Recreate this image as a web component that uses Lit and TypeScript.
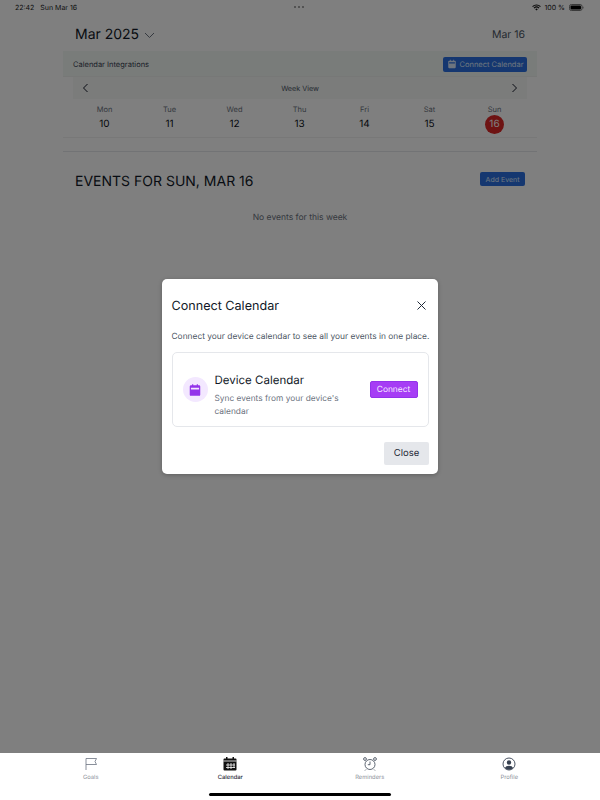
import { LitElement, html, css } from "lit";
import { customElement } from "lit/decorators.js";

const days = [
  ["Mon", "10"], ["Tue", "11"], ["Wed", "12"], ["Thu", "13"], ["Fri", "14"], ["Sat", "15"], ["Sun", "16"],
];

const calIcon = (cls: string) => html`<svg class=${cls} viewBox="0 0 24 24" fill="currentColor"><path d="M7 2h2v2h6V2h2v2h2a2 2 0 0 1 2 2v14a2 2 0 0 1-2 2H5a2 2 0 0 1-2-2V6a2 2 0 0 1 2-2h2V2zM5 8v3h14V8H5z"/></svg>`;

@customElement("app-root")
export class AppRoot extends LitElement {
  static styles = css`
    :host { display: flex; flex-direction: column; position: relative; width: 600px; height: 800px; overflow: hidden; font-family: Inter, "Noto Sans", sans-serif; background: #fff; color: #111827; text-rendering: geometricPrecision; }
    .main { flex: 1; display: flex; flex-direction: column; position: relative; min-height: 0; }
    .status { height: 14px; display: flex; align-items: center; justify-content: space-between; padding: 0 16px 0 15px; font-size: 7px; color: #222; position: relative; }
    .status .left { display: flex; gap: 6px; }
    .dots { position: absolute; left: 294px; top: 5.5px; display: flex; gap: 2px; }
    .dots i { width: 2px; height: 2px; border-radius: 50%; background: #888; }
    .status .right { display: flex; align-items: center; gap: 3px; }
    .wifi { width: 9px; height: 7px; }
    .battery { width: 15px; height: 7px; margin-left: 1px; }
    .content { padding: 0 63px; display: flex; flex-direction: column; }
    .head { display: flex; align-items: center; justify-content: space-between; padding: 4px 12px 0; height: 37px; box-sizing: border-box; }
    .month { display: flex; align-items: center; gap: 5px; font-size: 14px; color: #111827; }
    .chev { width: 11px; height: 7px; margin-top: 1px; }
    .today { font-size: 10.5px; color: #4b5563; }
    .integr { height: 26px; background: #f3f8f5; border-bottom: 1px solid #eef0ee; display: flex; align-items: center; justify-content: space-between; padding: 1px 10px 0 10px; font-size: 7.5px; color: #374151; box-sizing: border-box; }
    .btn { display: flex; align-items: center; justify-content: center; background: #3b82f6; color: #fff; border-radius: 2px; }
    .btn.conn { width: 84px; height: 15px; gap: 3px; font-size: 7.5px; color: #dbeafe; background: #2b6fe0; }
    .ico-sm { width: 10px; height: 10px; }
    .week { margin: 0 10px; height: 22px; background: #f6f8f7; display: flex; align-items: center; justify-content: space-between; padding: 0 9px; font-size: 7.2px; color: #4b5563; }
    .arrow { width: 7px; height: 10px; }
    .days { display: grid; grid-template-columns: repeat(7, 65px); padding: 5px 0 0 9px; height: 39px; box-sizing: border-box; border-bottom: 1px solid #f0f0f0; }
    .day { display: flex; flex-direction: column; align-items: center; }
    .dname { font-size: 7.5px; color: #6b7280; height: 11px; line-height: 11px; }
    .dnum { font-size: 10px; height: 19px; width: 19px; line-height: 19px; text-align: center; border-radius: 50%; color: #0b0f18; }
    .dnum.sel { background: #dc2626; color: #fff; }
    .rule { margin-top: 13px; height: 1px; background: #e5e7eb; }
    .ev-head { display: flex; justify-content: space-between; padding: 14px 12px 0; height: 60px; box-sizing: border-box; }
    .ev-title { font-size: 14px; line-height: 30px; height: 30px; color: #111827; margin-top: 1px; }
    .btn.add { width: 45px; height: 14px; font-size: 7px; margin-top: 6px; color: #dbeafe; background: #2b6fe0; }
    .empty { text-align: center; font-size: 8.5px; color: #6b7280; line-height: 12px; }
    .overlay { position: absolute; inset: 0; background: rgba(0,0,0,.5); }
    .dialog { position: absolute; left: 162px; top: 279px; width: 276px; height: 195px; box-sizing: border-box; background: #fff; border-radius: 5px; padding: 0 9px 0 9.5px; display: flex; flex-direction: column; box-shadow: 0 1px 4px rgba(0,0,0,.25); }
    .d-head { display: flex; align-items: center; justify-content: space-between; height: 45px; padding-top: 9px; box-sizing: border-box; }
    .d-title { font-size: 12.6px; color: #111827; }
    .x { width: 11px; height: 11px; margin-right: 2px; margin-top: -2px; }
    .d-text { font-size: 8.4px; color: #4b5563; margin-top: 7px; line-height: 12px; white-space: nowrap; }
    .card { margin-top: 9px; height: 75px; box-sizing: border-box; border: 1px solid #e5e7eb; border-radius: 5px; display: flex; align-items: center; padding: 0 10px; }
    .c-icon { width: 25px; height: 25px; border-radius: 50%; background: #f3e8ff; display: flex; align-items: center; justify-content: center; color: #9333ea; flex: none; }
    .c-icon svg { width: 14px; height: 14px; }
    .c-body { margin-left: 7px; width: 149px; flex: none; padding-top: 12px; }
    .c-title { font-size: 11.5px; color: #111827; line-height: 16px; }
    .c-sub { font-size: 8.35px; line-height: 13px; color: #6b7280; margin-top: 5px; }
    .btn.connect { margin-left: 6px; width: 48px; height: 17px; background: #a63df5; font-size: 8.4px; border: 1px solid #9333ea; box-sizing: border-box; color: #f5eaff; }
    .d-foot { display: flex; justify-content: flex-end; margin-top: 15px; }
    .close { width: 45px; height: 23px; background: #e5e7eb; border-radius: 2px; display: flex; align-items: center; justify-content: center; font-size: 9.5px; color: #1f2937; }
    .tabs { height: 47px; flex: none; display: grid; grid-template-columns: repeat(4, 139.5px); padding-left: 21px; background: #fff; position: relative; }
    .tab { display: flex; flex-direction: column; align-items: center; padding-top: 4px; font-size: 5.8px; color: #8a8f98; }
    .tab svg { width: 14px; height: 14px; margin-bottom: 3px; }
    .tab.on { color: #1f2937; font-weight: 500; }
    .home { position: absolute; left: 209px; top: 40px; width: 182px; height: 3px; border-radius: 2px; background: #000; }
  `;

  render() {
    return html`
      <div class="main">
        <div class="status">
          <div class="left"><span>22:42</span><span>Sun Mar 16</span></div>
          <div class="dots"><i></i><i></i><i></i></div>
          <div class="right">
            <svg class="wifi" viewBox="0 0 16 12" fill="none" stroke="#111" stroke-width="2"><path d="M1 4.500a10 10 0 0 1 14 0M3.500 7a6.500 6.500 0 0 1 9 0"/><path d="M8 11.500 5.800 9a3 3 0 0 1 4.400 0z" fill="#111" stroke="none"/></svg>
            <span>100 %</span>
            <svg class="battery" viewBox="0 0 15 7"><rect x=".5" y=".5" width="12.500" height="6" rx="1.800" fill="none" stroke="#777"/><rect x="1.500" y="1.500" width="10.500" height="4" rx="1" fill="#000"/><rect x="13.500" y="2.400" width="1" height="2.200" rx=".5" fill="#777"/></svg>
          </div>
        </div>
        <div class="content">
          <div class="head">
            <div class="month">Mar 2025
              <svg class="chev" viewBox="0 0 11 7" fill="none" stroke="#6b7280" stroke-width="1"><path d="M1 1l4.500 4.500L10 1"/></svg>
            </div>
            <div class="today">Mar 16</div>
          </div>
          <div class="integr">
            <span>Calendar Integrations</span>
            <div class="btn conn">${calIcon("ico-sm")}Connect Calendar</div>
          </div>
          <div class="week">
            <svg class="arrow" viewBox="0 0 7 10" fill="none" stroke="#111827" stroke-width="1"><path d="M5.500 1 1.500 5l4 4"/></svg>
            <span>Week View</span>
            <svg class="arrow" viewBox="0 0 7 10" fill="none" stroke="#111827" stroke-width="1"><path d="M1.500 1l4 4-4 4"/></svg>
          </div>
          <div class="days">
            ${days.map(([n, d]) => html`<div class="day"><div class="dname">${n}</div><div class="dnum ${d === "16" ? "sel" : ""}">${d}</div></div>`)}
          </div>
          <div class="rule"></div>
          <div class="ev-head">
            <div class="ev-title">EVENTS FOR SUN, MAR 16</div>
            <div class="btn add">Add Event</div>
          </div>
          <div class="empty">No events for this week</div>
        </div>
        <div class="overlay"></div>
      </div>
      <div class="tabs">
        <div class="tab">
          <svg viewBox="0 0 14 14" fill="none" stroke="#6b7280" stroke-width=".8"><path d="M2 13V1.500h10.500L11 4.500l1.500 3H2"/></svg>
          Goals
        </div>
        <div class="tab on">
          <svg viewBox="0 0 14 14"><path fill="#111" d="M3 0h1.500v1.500h5V0H11v1.500h1.500A1 1 0 0 1 13.500 2.500v10A1 1 0 0 1 12.500 13.500h-11A1 1 0 0 1 .5 12.500v-10A1 1 0 0 1 1.500 1.500H3z"/><path stroke="#fff" stroke-width=".8" d="M.5 4h13M5 6v6M8 6v6M11 6v5M3 8h9M3 10.500h9"/></svg>
          Calendar
        </div>
        <div class="tab">
          <svg viewBox="0 0 14 14" fill="none" stroke="#374151" stroke-width=".8"><circle cx="7" cy="7.500" r="5"/><path d="M7 4.500v3.200H4.800M3 12.500l-1 1M11 12.500l1 1"/><circle cx="2" cy="2" r="1.400"/><circle cx="12" cy="2" r="1.400"/></svg>
          Reminders
        </div>
        <div class="tab">
          <svg viewBox="0 0 14 14"><circle cx="7" cy="7" r="6" fill="none" stroke="#374151" stroke-width=".9"/><circle cx="7" cy="5.500" r="2.200" fill="#374151"/><path fill="#374151" d="M2.800 11a4.500 3.500 0 0 1 8.400 0A6 6 0 0 1 2.800 11z"/></svg>
          Profile
        </div>
        <div class="home"></div>
      </div>
      <div class="dialog">
        <div class="d-head">
          <div class="d-title">Connect Calendar</div>
          <svg class="x" viewBox="0 0 11 11" fill="none" stroke="#1f2937" stroke-width="1"><path d="M1.500 1.500l8 8M9.500 1.500l-8 8"/></svg>
        </div>
        <div class="d-text">Connect your device calendar to see all your events in one place.</div>
        <div class="card">
          <div class="c-icon">${calIcon("")}</div>
          <div class="c-body">
            <div class="c-title">Device Calendar</div>
            <div class="c-sub">Sync events from your device's calendar</div>
          </div>
          <div class="btn connect">Connect</div>
        </div>
        <div class="d-foot"><div class="close">Close</div></div>
      </div>
    `;
  }
}
